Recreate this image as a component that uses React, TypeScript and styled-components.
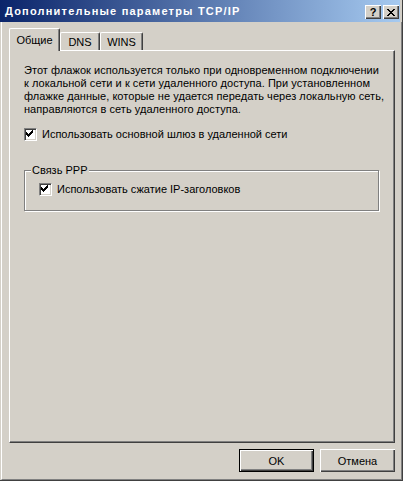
import { createGlobalStyle, styled } from "styled-components";

const face = "#D4D0C8";
const shadow = "#808080";
const darkShadow = "#404040";

const GlobalStyle = createGlobalStyle`
  html, body {
    margin: 0;
    padding: 0;
    background: ${face};
  }
  body {
    font-family: "Liberation Sans", Arial, sans-serif;
    font-size: 11px;
    color: #000;
  }
`;

const Window = styled.div`
  width: 403px;
  height: 481px;
  box-sizing: border-box;
  display: flex;
  flex-direction: column;
  background: ${face};
  border-right: 1px solid ${darkShadow};
  border-bottom: 1px solid ${darkShadow};
`;

const TitleBar = styled.div`
  height: 22px;
  flex-shrink: 0;
  margin-right: 2px;
  display: flex;
  justify-content: space-between;
  background: linear-gradient(to right, #0a246a, #a6caf0);
`;

const Caption = styled.div`
  padding-left: 5px;
  line-height: 23px;
  color: #fff;
  font-weight: bold;
  font-size: 11px;
  letter-spacing: 1.2px;
  white-space: nowrap;
`;

const CaptionButtons = styled.div`
  display: flex;
  gap: 2px;
  padding: 5px 1px 0 0;
`;

const CaptionButton = styled.div`
  width: 16px;
  height: 14px;
  box-sizing: border-box;
  display: flex;
  align-items: center;
  justify-content: center;
  background: ${face};
  box-shadow: inset 1px 1px #fff, inset -1px -1px ${darkShadow},
    inset -2px -2px ${shadow};
  font-weight: bold;
  font-size: 11px;
  line-height: 12px;
`;

const Body = styled.div`
  flex: 1;
  margin-left: 1px;
  border-left: 1px solid #fff;
  border-right: 1px solid ${shadow};
  border-bottom: 1px solid ${shadow};
  padding: 6px 6px 7px 7px;
  display: flex;
  flex-direction: column;
`;

const TabStrip = styled.div`
  height: 22px;
  display: flex;
  align-items: flex-end;
`;

const Tab = styled.div<{ $active?: boolean; $width: number }>`
  position: relative;
  z-index: ${(p) => (p.$active ? 1 : 0)};
  width: ${(p) => p.$width}px;
  height: ${(p) => (p.$active ? 23 : 18)}px;
  margin-bottom: ${(p) => (p.$active ? -1 : 0)}px;
  box-sizing: border-box;
  padding-top: ${(p) => (p.$active ? 5 : 3)}px;
  text-align: center;
  line-height: 13px;
  background: ${face};
  border-top: 1px solid #fff;
  border-left: 1px solid #fff;
  border-right: 1px solid ${darkShadow};
  border-radius: 2px 2px 0 0;
  box-shadow: inset -1px 0 ${shadow};
`;

const TabPanel = styled.div`
  width: 386px;
  height: 393px;
  box-sizing: border-box;
  padding: 13px 14px;
  border-top: 1px solid #fff;
  border-left: 1px solid #fff;
  border-right: 1px solid ${darkShadow};
  border-bottom: 1px solid ${darkShadow};
  box-shadow: inset -1px -1px ${shadow};
`;

const Description = styled.div`
  line-height: 13px;
  letter-spacing: 0.05px;
`;

const Line = styled.div`
  white-space: nowrap;
`;

const CheckRow = styled.div<{ $top: number }>`
  margin-top: ${(p) => p.$top}px;
  height: 13px;
  display: flex;
  align-items: center;
  gap: 5px;
  line-height: 13px;
  white-space: nowrap;
`;

const CheckBox = styled.div`
  width: 13px;
  height: 13px;
  box-sizing: border-box;
  flex-shrink: 0;
  background: #fff;
  border-top: 1px solid ${shadow};
  border-left: 1px solid ${shadow};
  border-right: 1px solid #fff;
  border-bottom: 1px solid #fff;
  box-shadow: inset 1px 1px ${darkShadow}, inset -1px -1px ${face};
  display: flex;
`;

const GroupBox = styled.div`
  position: relative;
  margin-top: 29px;
  width: 355px;
  box-sizing: border-box;
  padding: 12px 14px 14px 14px;
  border: 1px solid ${shadow};
  box-shadow: inset 1px 1px #fff, 1px 1px #fff;
`;

const GroupLegend = styled.span`
  position: absolute;
  top: -7px;
  left: 6px;
  padding: 0 2px 0 1px;
  line-height: 13px;
  background: ${face};
`;

const ButtonRow = styled.div`
  margin-top: 6px;
  display: flex;
  justify-content: flex-end;
  gap: 6px;
`;

const DialogButton = styled.div<{ $default?: boolean }>`
  width: 75px;
  height: 23px;
  box-sizing: border-box;
  display: flex;
  align-items: center;
  justify-content: center;
  background: ${face};
  border: ${(p) => (p.$default ? "1px solid #000" : "none")};
  box-shadow: inset 1px 1px #fff, inset -1px -1px ${darkShadow},
    inset -2px -2px ${shadow};
`;

const checkCols = [3, 4, 5, 4, 3, 2, 1];

function CheckMark() {
  return (
    <svg width="9" height="9" viewBox="0 0 9 9" shapeRendering="crispEdges">
      {checkCols.map((y, i) => (
        <rect key={i} x={i + 1} y={y} width="1" height="3" fill="#000" />
      ))}
    </svg>
  );
}

const closeRows = [
  [0, 1, 6, 7],
  [1, 2, 5, 6],
  [2, 3, 4, 5],
  [3, 4],
  [2, 3, 4, 5],
  [1, 2, 5, 6],
  [0, 1, 6, 7],
];

function CloseGlyph() {
  return (
    <svg width="8" height="7" viewBox="0 0 8 7" shapeRendering="crispEdges">
      {closeRows.map((cols, y) =>
        cols.map((x) => (
          <rect key={`${x}-${y}`} x={x} y={y} width="1" height="1" fill="#000" />
        ))
      )}
    </svg>
  );
}

const lines = [
  "Этот флажок используется только при одновременном подключении",
  "к локальной сети и к сети удаленного доступа. При установленном",
  "флажке данные, которые не удается передать через локальную сеть,",
  "направляются в сеть удаленного доступа.",
];

export default function App() {
  return (
    <>
      <GlobalStyle />
      <Window>
        <TitleBar>
          <Caption>Дополнительные параметры TCP/IP</Caption>
          <CaptionButtons>
            <CaptionButton>?</CaptionButton>
            <CaptionButton>
              <CloseGlyph />
            </CaptionButton>
          </CaptionButtons>
        </TitleBar>
        <Body>
          <TabStrip>
            <Tab $active $width={51}>
              Общие
            </Tab>
            <Tab $width={40}>DNS</Tab>
            <Tab $width={43}>WINS</Tab>
          </TabStrip>
          <TabPanel>
            <Description>
              {lines.map((l) => (
                <Line key={l}>{l}</Line>
              ))}
            </Description>
            <CheckRow $top={12}>
              <CheckBox>
                <CheckMark />
              </CheckBox>
              Использовать основной шлюз в удаленной сети
            </CheckRow>
            <GroupBox>
              <GroupLegend>Связь PPP</GroupLegend>
              <CheckRow $top={0}>
                <CheckBox>
                  <CheckMark />
                </CheckBox>
                Использовать сжатие IP-заголовков
              </CheckRow>
            </GroupBox>
          </TabPanel>
          <ButtonRow>
            <DialogButton $default>OK</DialogButton>
            <DialogButton>Отмена</DialogButton>
          </ButtonRow>
        </Body>
      </Window>
    </>
  );
}
